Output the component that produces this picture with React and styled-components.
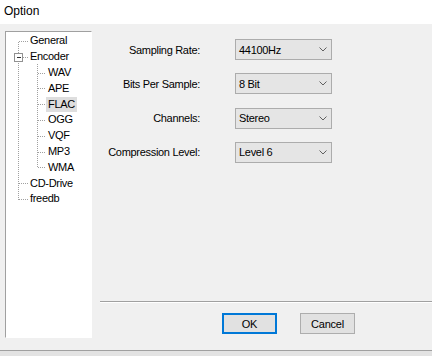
import React from "react";
import styled, { createGlobalStyle } from "styled-components";

const GlobalStyle = createGlobalStyle`
  html, body {
    margin: 0;
    padding: 0;
    background: #f0f0f0;
  }
  body {
    font-family: "Liberation Sans", Arial, sans-serif;
    font-size: 11px;
    color: #000;
  }
`;

const ROW_H = 15.8;

const Window = styled.div`
  width: 432px;
  height: 356px;
  display: flex;
  flex-direction: column;
  background: #e3e3e3;
  overflow: hidden;
`;

const TitleBar = styled.div`
  height: 24px;
  flex-shrink: 0;
  display: flex;
  align-items: center;
  padding: 0 0 2px 4px;
  box-sizing: border-box;
  background: #fff;
  font-size: 12px;
`;

const Body = styled.div`
  height: 327px;
  flex-shrink: 0;
  display: flex;
  box-sizing: border-box;
  padding: 7px 0 0 5px;
  background: #f0f0f0;
  border-bottom: 1px solid #a0a0a0;
`;

const TreePanel = styled.div`
  position: relative;
  width: 87px;
  height: 307px;
  box-sizing: border-box;
  background: #fff;
  border-top: 1px solid #a0a0a0;
  border-left: 1px solid #a0a0a0;
  border-right: 1px solid #fff;
  border-bottom: 1px solid #fff;
  padding-top: 1px;
  letter-spacing: -0.3px;
`;

const TreeRow = styled.div`
  height: ${ROW_H}px;
  display: flex;
  align-items: center;
  padding-left: ${(p) => (p.$level === 0 ? 22 : 40)}px;
`;

const TreeLabel = styled.span`
  padding: 1px 2px;
  line-height: 13px;
  background: ${(p) => (p.$selected ? "#dedede" : "transparent")};
`;

const Lines = styled.svg`
  position: absolute;
  left: 0;
  top: 0;
  pointer-events: none;
`;

const Main = styled.div`
  flex: 1;
  margin-left: 8px;
  display: flex;
  flex-direction: column;
  padding-bottom: 16px;
`;

const Form = styled.div`
  display: grid;
  grid-template-columns: 100px 97px;
  column-gap: 35px;
  row-gap: 13.33px;
  align-items: center;
  padding-top: 8px;
  letter-spacing: -0.3px;
`;

const Label = styled.div`
  text-align: right;
`;

const Combo = styled.div`
  height: 21px;
  box-sizing: border-box;
  display: flex;
  align-items: center;
  justify-content: space-between;
  padding: 0 4px 0 3px;
  background: #e5e5e5;
  border: 1px solid #acacac;
`;

const Separator = styled.div`
  margin-top: auto;
  height: 1px;
  background: #a0a0a0;
  border-bottom: 1px solid #fff;
`;

const ButtonRow = styled.div`
  display: flex;
  gap: 23px;
  margin-top: 10px;
  padding-left: 122px;
`;

const Button = styled.button`
  width: 55px;
  height: 21px;
  box-sizing: border-box;
  padding: 0;
  font-family: inherit;
  font-size: 11px;
  letter-spacing: -0.2px;
  color: #000;
  background: #e1e1e1;
  border: ${(p) => (p.$default ? "2px solid #0078d7" : "1px solid #adadad")};
`;

const tree = [
  { label: "General", level: 0 },
  { label: "Encoder", level: 0, expanded: true },
  { label: "WAV", level: 1 },
  { label: "APE", level: 1 },
  { label: "FLAC", level: 1, selected: true },
  { label: "OGG", level: 1 },
  { label: "VQF", level: 1 },
  { label: "MP3", level: 1 },
  { label: "WMA", level: 1 },
  { label: "CD-Drive", level: 0 },
  { label: "freedb", level: 0 },
];

const fields = [
  ["Sampling Rate:", "44100Hz"],
  ["Bits Per Sample:", "8 Bit"],
  ["Channels:", "Stereo"],
  ["Compression Level:", "Level 6"],
];

function Chevron() {
  return (
    <svg width="8" height="5" viewBox="0 0 8 5">
      <path d="M0.5 0.5 L4 4 L7.5 0.5" fill="none" stroke="#606060" strokeWidth="1" />
    </svg>
  );
}

function TreeLines() {
  const cy = (i) => Math.round(1 + ROW_H * i + ROW_H / 2) + 0.5;
  const rootX = 12.5;
  const childX = 31.5;
  const dash = { stroke: "#a0a0a0", strokeDasharray: "1 1", strokeWidth: 1 };
  return (
    <Lines width="85" height="305" shapeRendering="crispEdges">
      <line x1={rootX} y1={cy(0)} x2={rootX} y2={cy(1) - 5} {...dash} />
      <line x1={rootX} y1={cy(1) + 5} x2={rootX} y2={cy(10)} {...dash} />
      {[0, 9, 10].map((i) => (
        <line key={i} x1={rootX} y1={cy(i)} x2={22} y2={cy(i)} {...dash} />
      ))}
      <line x1={17} y1={cy(1)} x2={22} y2={cy(1)} {...dash} />
      <line x1={childX} y1={cy(1) + 6} x2={childX} y2={cy(8)} {...dash} />
      {[2, 3, 4, 5, 6, 7, 8].map((i) => (
        <line key={i} x1={childX} y1={cy(i)} x2={40} y2={cy(i)} {...dash} />
      ))}
      <rect x={8.5} y={cy(1) - 4} width="8" height="8" fill="#fff" stroke="#919191" />
      <line x1={10.5} y1={cy(1)} x2={15} y2={cy(1)} stroke="#333" />
    </Lines>
  );
}

export default function App() {
  return (
    <>
      <GlobalStyle />
      <Window>
        <TitleBar>Option</TitleBar>
        <Body>
          <TreePanel>
            <TreeLines />
            {tree.map((n) => (
              <TreeRow key={n.label} $level={n.level}>
                <TreeLabel $selected={n.selected}>{n.label}</TreeLabel>
              </TreeRow>
            ))}
          </TreePanel>
          <Main>
            <Form>
              {fields.map(([label, value]) => (
                <React.Fragment key={label}>
                  <Label>{label}</Label>
                  <Combo>
                    <span>{value}</span>
                    <Chevron />
                  </Combo>
                </React.Fragment>
              ))}
            </Form>
            <Separator />
            <ButtonRow>
              <Button $default>OK</Button>
              <Button>Cancel</Button>
            </ButtonRow>
          </Main>
        </Body>
      </Window>
    </>
  );
}
